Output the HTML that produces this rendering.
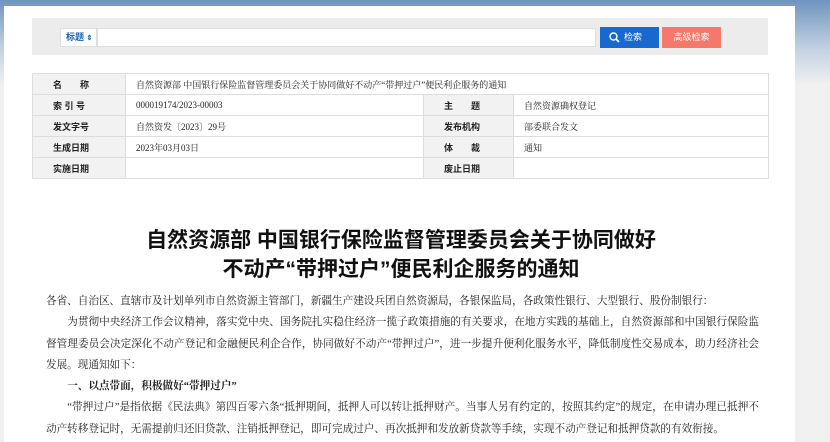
<!DOCTYPE html>
<html style="background:#f0f0f0"><head><meta charset="utf-8"><style>
*{margin:0;padding:0;box-sizing:border-box}
body{width:830px;height:442px;overflow:hidden;background:linear-gradient(#6f94bf 0,#c5d3e2 50px,#f0f0f0 85px,#f0f0f0 442px) no-repeat;background-size:830px 442px;font-family:"Liberation Serif","Noto Serif CJK SC",serif;position:relative}
.page{position:absolute;left:4px;top:6px;width:791px;height:436px;background:#fff}
.bar{position:absolute;left:32px;top:18px;width:736px;height:37px;background:#ececec}
.sel{position:absolute;left:60px;top:28px;width:37px;height:19px;background:#fff;border:1px solid #ddd;font:bold 9px "Liberation Sans","Noto Sans CJK SC",sans-serif;color:#1a5fb4;line-height:17px;padding-left:5px}
.inp{position:absolute;left:97px;top:28px;width:499px;height:19px;background:#fff;border:1px solid #ddd}
.b1{position:absolute;left:600px;top:27px;width:59px;height:21px;background:#1769d1;color:#fff;font:9px "Liberation Sans","Noto Sans CJK SC",sans-serif;line-height:21px;padding-left:24px}
.b2{position:absolute;left:662px;top:27px;width:59px;height:21px;background:#f6786a;color:#fff;font:9px "Liberation Sans","Noto Sans CJK SC",sans-serif;line-height:21px;text-align:center}
table{position:absolute;left:32px;top:73px;width:737px;border-collapse:collapse;font-size:9px}
td{border:1px solid #ddd;height:21px;padding:0 10px;color:#222}
td.l{background:#f2f2f2;font-weight:bold;font-family:"Liberation Sans","Noto Sans CJK SC",sans-serif;padding-left:20px}
h1{position:absolute;left:0;width:802px;top:226px;text-align:center;font:bold 21px/29px "Liberation Sans","Noto Sans CJK SC",sans-serif;color:#111}
.body{position:absolute;left:46px;top:291px;width:713px;font-size:10.6px;line-height:21.3px;color:#222;text-align:justify}
.body p{text-indent:2em}
.body p.n{text-indent:0}
</style></head><body>
<div class="page"></div>
<div class="bar"></div>
<div class="sel">标题 <span style="font-size:7px">⇕</span></div>
<div class="inp"></div>
<div class="b1"><svg style="position:absolute;left:9px;top:5px" width="11" height="11" viewBox="0 0 11 11"><circle cx="4.5" cy="4.5" r="3.5" fill="none" stroke="#fff" stroke-width="1.4"/><path d="M7 7l3 3" stroke="#fff" stroke-width="1.6"/></svg>检索</div>
<div class="b2">高级检索</div>
<table>
<tr><td class="l" style="width:93px">名　　称</td><td colspan="3">自然资源部 中国银行保险监督管理委员会关于协同做好不动产“带押过户”便民利企服务的通知</td></tr>
<tr><td class="l">索 引 号</td><td style="width:298px">000019174/2023-00003</td><td class="l" style="width:90px">主　　题</td><td>自然资源确权登记</td></tr>
<tr><td class="l">发文字号</td><td>自然资发〔2023〕29号</td><td class="l">发布机构</td><td>部委联合发文</td></tr>
<tr><td class="l">生成日期</td><td>2023年03月03日</td><td class="l">体　　裁</td><td>通知</td></tr>
<tr><td class="l">实施日期</td><td></td><td class="l">废止日期</td><td></td></tr>
</table>
<h1>自然资源部 中国银行保险监督管理委员会关于协同做好<br>不动产“带押过户”便民利企服务的通知</h1>
<div class="body">
<p class="n">各省、自治区、直辖市及计划单列市自然资源主管部门，新疆生产建设兵团自然资源局，各银保监局，各政策性银行、大型银行、股份制银行：</p>
<p>为贯彻中央经济工作会议精神，落实党中央、国务院扎实稳住经济一揽子政策措施的有关要求，在地方实践的基础上，自然资源部和中国银行保险监督管理委员会决定深化不动产登记和金融便民利企合作，协同做好不动产“带押过户”，进一步提升便利化服务水平，降低制度性交易成本，助力经济社会发展。现通知如下：</p>
<p style="font-weight:bold">一、以点带面，积极做好“带押过户”</p>
<p>“带押过户”是指依据《民法典》第四百零六条“抵押期间，抵押人可以转让抵押财产。当事人另有约定的，按照其约定”的规定，在申请办理已抵押不动产转移登记时，无需提前归还旧贷款、注销抵押登记，即可完成过户、再次抵押和发放新贷款等手续，实现不动产登记和抵押贷款的有效衔接。</p>
</div>
</body></html>
